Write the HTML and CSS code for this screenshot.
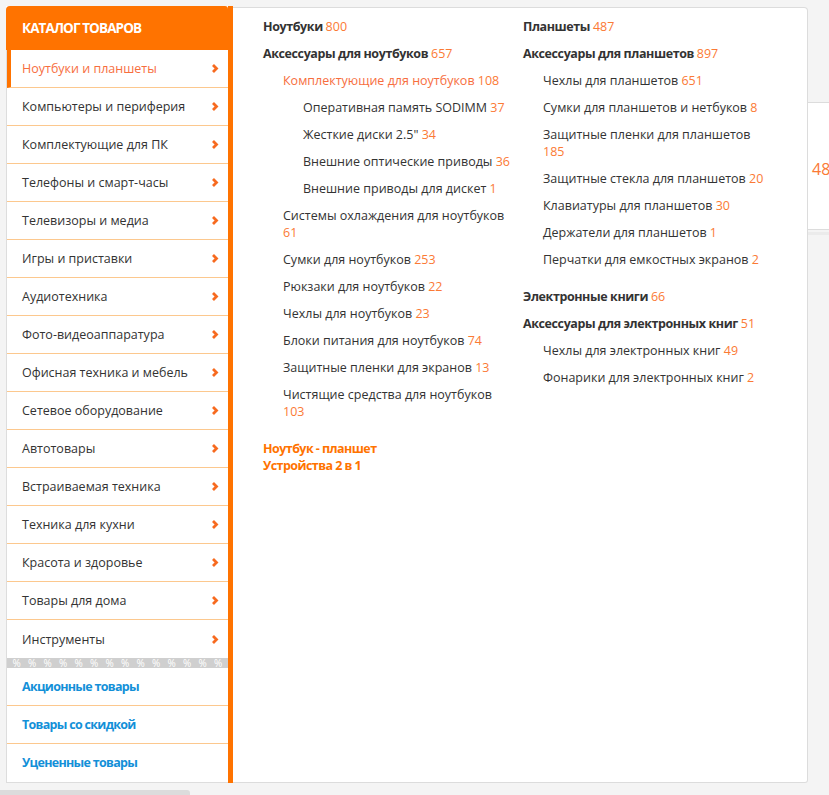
FILE: index.html
```html
<!DOCTYPE html>
<html lang="ru">
<head>
<meta charset="utf-8">
<title>Каталог товаров</title>
<link rel="stylesheet" href="styles.css">
</head>
<body>
<div class="page">
  <div class="catalog">
    <aside class="sidebar">
      <div class="sidebar-head">КАТАЛОГ ТОВАРОВ</div>
      <ul class="menu">
        <li class="menu-item active"><span>Ноутбуки и планшеты</span><svg class="chev" viewBox="0 0 8 10"><polyline points="2,1.5 5.5,5 2,8.5"/></svg></li>
        <li class="menu-item"><span>Компьютеры и периферия</span><svg class="chev" viewBox="0 0 8 10"><polyline points="2,1.5 5.5,5 2,8.5"/></svg></li>
        <li class="menu-item"><span>Комплектующие для ПК</span><svg class="chev" viewBox="0 0 8 10"><polyline points="2,1.5 5.5,5 2,8.5"/></svg></li>
        <li class="menu-item"><span>Телефоны и смарт-часы</span><svg class="chev" viewBox="0 0 8 10"><polyline points="2,1.5 5.5,5 2,8.5"/></svg></li>
        <li class="menu-item"><span>Телевизоры и медиа</span><svg class="chev" viewBox="0 0 8 10"><polyline points="2,1.5 5.5,5 2,8.5"/></svg></li>
        <li class="menu-item"><span>Игры и приставки</span><svg class="chev" viewBox="0 0 8 10"><polyline points="2,1.5 5.5,5 2,8.5"/></svg></li>
        <li class="menu-item"><span>Аудиотехника</span><svg class="chev" viewBox="0 0 8 10"><polyline points="2,1.5 5.5,5 2,8.5"/></svg></li>
        <li class="menu-item"><span>Фото-видеоаппаратура</span><svg class="chev" viewBox="0 0 8 10"><polyline points="2,1.5 5.5,5 2,8.5"/></svg></li>
        <li class="menu-item"><span>Офисная техника и мебель</span><svg class="chev" viewBox="0 0 8 10"><polyline points="2,1.5 5.5,5 2,8.5"/></svg></li>
        <li class="menu-item"><span>Сетевое оборудование</span><svg class="chev" viewBox="0 0 8 10"><polyline points="2,1.5 5.5,5 2,8.5"/></svg></li>
        <li class="menu-item"><span>Автотовары</span><svg class="chev" viewBox="0 0 8 10"><polyline points="2,1.5 5.5,5 2,8.5"/></svg></li>
        <li class="menu-item"><span>Встраиваемая техника</span><svg class="chev" viewBox="0 0 8 10"><polyline points="2,1.5 5.5,5 2,8.5"/></svg></li>
        <li class="menu-item"><span>Техника для кухни</span><svg class="chev" viewBox="0 0 8 10"><polyline points="2,1.5 5.5,5 2,8.5"/></svg></li>
        <li class="menu-item"><span>Красота и здоровье</span><svg class="chev" viewBox="0 0 8 10"><polyline points="2,1.5 5.5,5 2,8.5"/></svg></li>
        <li class="menu-item"><span>Товары для дома</span><svg class="chev" viewBox="0 0 8 10"><polyline points="2,1.5 5.5,5 2,8.5"/></svg></li>
        <li class="menu-item last"><span>Инструменты</span><svg class="chev" viewBox="0 0 8 10"><polyline points="2,1.5 5.5,5 2,8.5"/></svg></li>
      </ul>
      <div class="percent-strip"><span>%</span><span>%</span><span>%</span><span>%</span><span>%</span><span>%</span><span>%</span><span>%</span><span>%</span><span>%</span><span>%</span><span>%</span><span>%</span><span>%</span></div>
      <ul class="promo">
        <li class="promo-item">Акционные товары</li>
        <li class="promo-item">Товары со скидкой</li>
        <li class="promo-item last">Уцененные товары</li>
      </ul>
    </aside>
    <div class="panel">
      <div class="col">
        <div class="group">
          <div class="lvl1">Ноутбуки <span class="cnt">800</span></div>
          <div class="lvl1">Аксессуары для ноутбуков <span class="cnt">657</span></div>
          <div class="lvl2 hot">Комплектующие для ноутбуков <span class="cnt">108</span></div>
          <div class="lvl3">Оперативная память SODIMM <span class="cnt">37</span></div>
          <div class="lvl3">Жесткие диски 2.5" <span class="cnt">34</span></div>
          <div class="lvl3">Внешние оптические приводы <span class="cnt">36</span></div>
          <div class="lvl3">Внешние приводы для дискет <span class="cnt">1</span></div>
          <div class="lvl2">Системы охлаждения для ноутбуков <span class="cnt">61</span></div>
          <div class="lvl2">Сумки для ноутбуков <span class="cnt">253</span></div>
          <div class="lvl2">Рюкзаки для ноутбуков <span class="cnt">22</span></div>
          <div class="lvl2">Чехлы для ноутбуков <span class="cnt">23</span></div>
          <div class="lvl2">Блоки питания для ноутбуков <span class="cnt">74</span></div>
          <div class="lvl2">Защитные пленки для экранов <span class="cnt">13</span></div>
          <div class="lvl2">Чистящие средства для ноутбуков <span class="cnt">103</span></div>
        </div>
        <div class="special">
          <div>Ноутбук - планшет</div>
          <div>Устройства 2 в 1</div>
        </div>
      </div>
      <div class="col">
        <div class="group">
          <div class="lvl1">Планшеты <span class="cnt">487</span></div>
          <div class="lvl1">Аксессуары для планшетов <span class="cnt">897</span></div>
          <div class="lvl2">Чехлы для планшетов <span class="cnt">651</span></div>
          <div class="lvl2">Сумки для планшетов и нетбуков <span class="cnt">8</span></div>
          <div class="lvl2">Защитные пленки для планшетов <span class="cnt">185</span></div>
          <div class="lvl2">Защитные стекла для планшетов <span class="cnt">20</span></div>
          <div class="lvl2">Клавиатуры для планшетов <span class="cnt">30</span></div>
          <div class="lvl2">Держатели для планшетов <span class="cnt">1</span></div>
          <div class="lvl2">Перчатки для емкостных экранов <span class="cnt">2</span></div>
        </div>
        <div class="group next">
          <div class="lvl1">Электронные книги <span class="cnt">66</span></div>
          <div class="lvl1">Аксессуары для электронных книг <span class="cnt">51</span></div>
          <div class="lvl2">Чехлы для электронных книг <span class="cnt">49</span></div>
          <div class="lvl2">Фонарики для электронных книг <span class="cnt">2</span></div>
        </div>
      </div>
    </div>
  </div>
  <div class="aside-right">
    <div class="widget"><span class="widget-num">48</span></div>
    <div class="widget-next"></div>
  </div>
</div>
<div class="hscroll"></div>
</body>
</html>
```
FILE: styles.css
```css
* { box-sizing: border-box; }
html, body { margin: 0; padding: 0; }
body {
  background: #f4f4f4;
  font-family: "Open Sans", "Noto Sans", sans-serif;
  font-size: 12.5px;
  color: #333;
  width: 829px;
  height: 795px;
  overflow: hidden;
  position: relative;
}
ul { list-style: none; margin: 0; padding: 0; }

.page {
  display: flex;
  align-items: flex-start;
  padding: 6px 0 0 6px;
}
.catalog {
  display: flex;
  align-items: flex-start;
  flex: none;
}
.sidebar {
  width: 227px;
  border-right: 5px solid #ff7300;
  background: #fff;
  flex: none;
}
.sidebar-head {
  height: 44px;
  background: #ff7300;
  color: #fff;
  font-weight: 700;
  font-size: 13.5px;
  letter-spacing: -0.9px;
  line-height: 44px;
  padding-left: 16px;
  border-radius: 4px 3px 0 0;
}
.menu, .promo, .percent-strip {
  border-left: 1px solid #ddd;
}
.menu-item {
  height: 38px;
  border-bottom: 1px solid #fcc88e;
  display: flex;
  align-items: center;
  justify-content: space-between;
  padding: 0 9px 0 15px;
  color: #333;
}
.menu-item.last { border-bottom: none; }
.menu-item.active {
  border-left: 4px solid #ff7300;
  padding-left: 11px;
  color: #f76e3e;
}
.chev {
  width: 8px;
  height: 11px;
  fill: none;
  stroke: #f76a1f;
  stroke-width: 2.8;
}
.percent-strip {
  height: 10px;
  background: #cfcfcf;
  display: flex;
  padding-left: 2px;
}
.percent-strip span {
  width: 15.5px;
  flex: none;
  color: #fff;
  font-size: 10px;
  line-height: 10px;
  text-align: center;
}
.promo { border-bottom: 1px solid #ddd; }
.promo-item {
  height: 38px;
  line-height: 37px;
  border-bottom: 1px solid #fcc88e;
  padding-left: 15px;
  color: #1390d8;
  font-weight: 700;
  letter-spacing: -0.7px;
}
.promo-item.last { border-bottom: none; }

.panel {
  width: 575px;
  height: 776px;
  margin-top: 1px;
  background: #fff;
  border: 1px solid #dcdcdc;
  border-left: none;
  border-radius: 0 4px 3px 0;
  display: grid;
  grid-template-columns: 250px 250px;
  column-gap: 10px;
  align-content: start;
  padding: 10px 0 0 30px;
  line-height: 17px;
}
.lvl1, .lvl2, .lvl3 { margin-bottom: 10px; }
.lvl1 { font-weight: 700; color: #333; letter-spacing: -0.4px; }
.lvl1 .cnt { letter-spacing: 0; }
.lvl2 { padding-left: 20px; }
.lvl3 { padding-left: 40px; }
.cnt { color: #fb7a35; font-weight: 400; }
.hot { color: #f76e3e; }
.group.next { padding-top: 10px; }
.special {
  padding-top: 10px;
  color: #ff7300;
  font-weight: 700;
  letter-spacing: -0.55px;
}

.aside-right {
  flex: none;
  width: 40px;
  margin-top: 96px;
}
.widget {
  height: 128px;
  background: #fff;
  border: 1px solid #dcdcdc;
  border-left: none;
  padding: 56px 0 0 4px;
}
.widget-num {
  color: #fb7a35;
  font-size: 16px;
  line-height: 20px;
}
.widget-next {
  margin-top: 2px;
  height: 3px;
  background: #ebebeb;
}
.hscroll {
  position: absolute;
  left: 0;
  bottom: 0;
  width: 190px;
  height: 5px;
  background: #dcdcdc;
  border-radius: 0 3px 0 0;
}
```
